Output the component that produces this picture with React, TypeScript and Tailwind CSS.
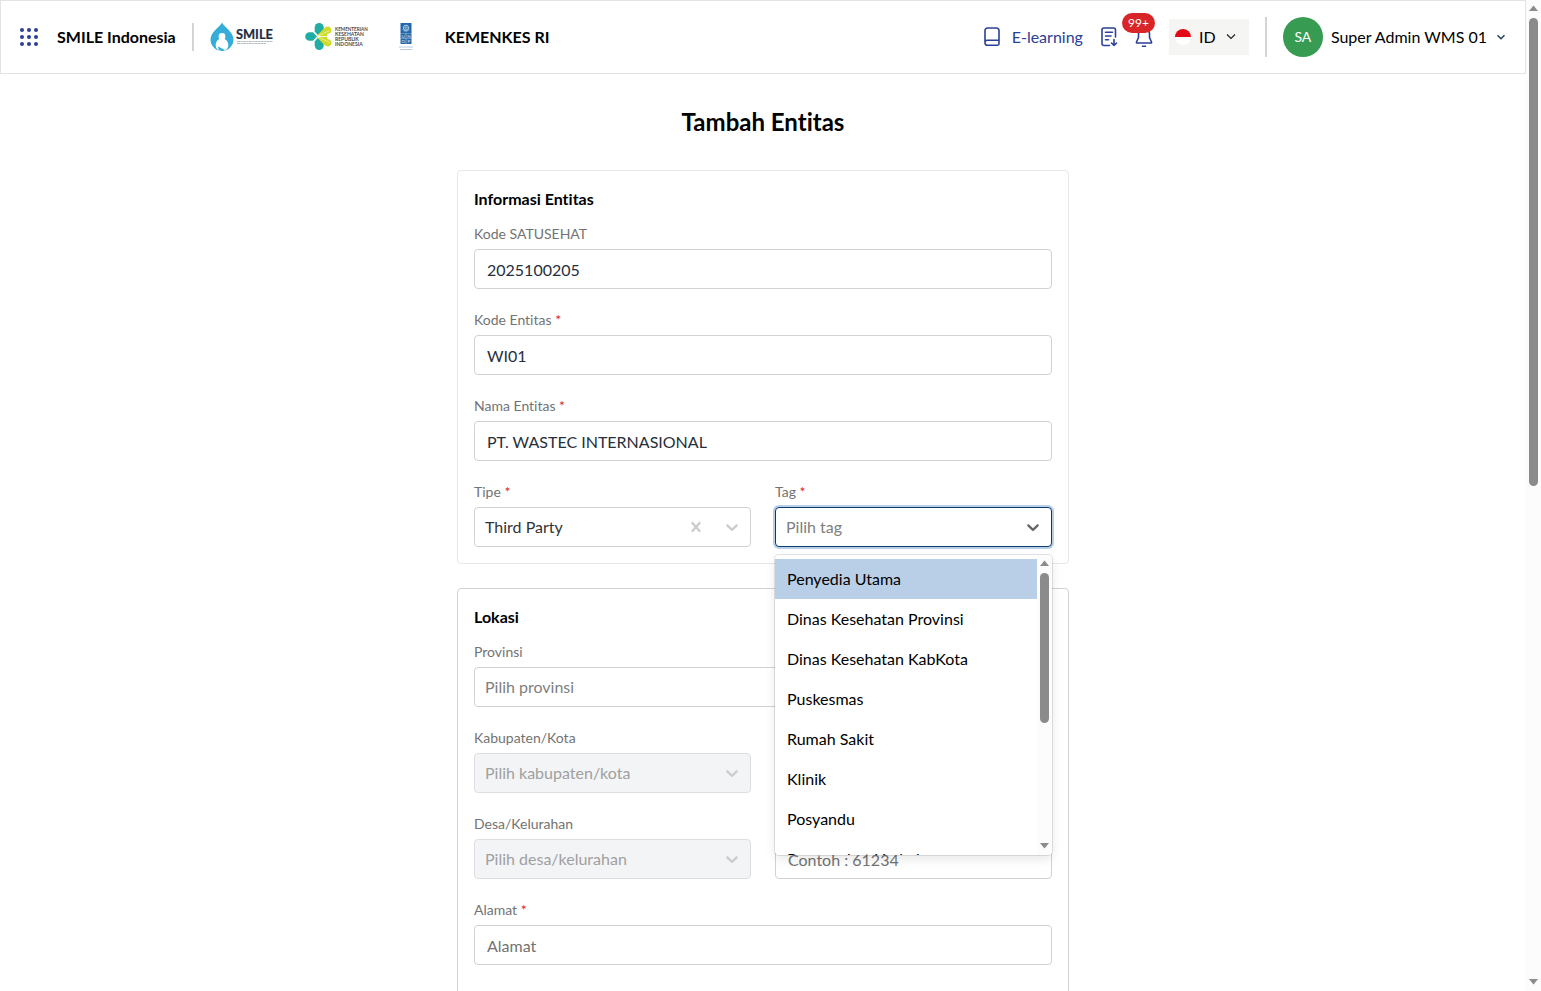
import type { ReactNode } from "react";

type FieldProps = { id: string; label: string; required?: boolean; children: ReactNode };
type SelectProps = { id: string; text: string; filled?: boolean; disabled?: boolean; clearable?: boolean; open?: boolean };

const tags = [
  "Penyedia Utama",
  "Dinas Kesehatan Provinsi",
  "Dinas Kesehatan KabKota",
  "Puskesmas",
  "Rumah Sakit",
  "Klinik",
  "Posyandu",
  "Pengangkut Limbah",
];

const inputClass = "block h-10 w-full rounded border border-[#d2d2d2] bg-white px-3 text-base text-[#262f3c] placeholder:text-[#737373] outline-none";

function Chevron({ className }: { className: string }) {
  return (
    <svg className={className} viewBox="0 0 20 20" fill="currentColor" aria-hidden="true">
      <path d="M4.516 7.548c0.436-0.446 1.043-0.481 1.576 0l3.908 3.747 3.908-3.747c0.533-0.481 1.141-0.446 1.574 0 0.436 0.445 0.408 1.197 0 1.615-0.406 0.418-4.695 4.502-4.695 4.502-0.217 0.223-0.502 0.335-0.787 0.335s-0.57-0.112-0.789-0.335c0 0-4.287-4.084-4.695-4.502s-0.436-1.17 0-1.615z" />
    </svg>
  );
}

function Cross() {
  return (
    <svg className="size-5" viewBox="0 0 20 20" fill="currentColor" aria-hidden="true">
      <path d="M14.348 14.849c-0.469 0.469-1.229 0.469-1.697 0l-2.651-3.030-2.651 3.029c-0.469 0.469-1.229 0.469-1.697 0-0.469-0.469-0.469-1.229 0-1.697l2.758-3.15-2.759-3.152c-0.469-0.469-0.469-1.228 0-1.697s1.228-0.469 1.697 0l2.652 3.031 2.651-3.031c0.469-0.469 1.228-0.469 1.697 0s0.469 1.229 0 1.697l-2.758 3.152 2.758 3.15c0.469 0.469 0.469 1.229 0 1.698z" />
    </svg>
  );
}

function Field({ id, label, required, children }: FieldProps) {
  return (
    <div className="relative min-w-0">
      <label htmlFor={id} className="mb-[5px] block text-sm leading-5 text-[#737373]">
        {label} {required && <span className="text-[#dc2626]">*</span>}
      </label>
      {children}
    </div>
  );
}

function Select({ id, text, filled, disabled, clearable, open }: SelectProps) {
  const tone = disabled ? "border-[#dcdee2] bg-[#f3f4f6] text-[#a0a0a0]" : filled ? "border-[#d2d2d2] bg-white text-[#333333]" : "bg-white text-[#808080]";
  const ring = open ? "border-[#0c3b70] ring-2 ring-[#b9cfe8]" : disabled ? "" : "border-[#d2d2d2]";
  return (
    <div className="relative">
      <select id={id} disabled={disabled} className={`block h-10 w-full appearance-none rounded border px-2.5 text-base opacity-100 outline-none ${tone} ${ring}`}>
        <option>{text}</option>
      </select>
      {clearable && (
        <button type="button" aria-label="Hapus" className="absolute inset-y-0 right-[45px] flex items-center text-[#cccccc]">
          <Cross />
        </button>
      )}
      <Chevron className={`pointer-events-none absolute right-[9px] top-2.5 size-5 ${open ? "text-[#666666]" : "text-[#cccccc]"}`} />
    </div>
  );
}

function ScrollBar({ thumb }: { thumb: string }) {
  return (
    <div className="flex w-[15px] shrink-0 flex-col items-center bg-[#fcfcfc]" aria-hidden="true">
      <svg className="my-1 h-2.5 w-[9px] shrink-0" viewBox="0 0 9 10"><path d="M4.500 1.500L9 7H0z" fill="#8b8b8b" /></svg>
      <div className="min-h-0 w-full flex-1 px-[3px]">
        <div className={`w-[9px] rounded-full bg-[#8b8b8b] ${thumb}`} />
      </div>
      <svg className="my-1 h-2.5 w-[9px] shrink-0" viewBox="0 0 9 10"><path d="M4.500 7.500L9 2H0z" fill="#8b8b8b" /></svg>
    </div>
  );
}

function SmileLogo() {
  return (
    <svg className="h-[30px] w-16" viewBox="0 0 64 30" role="img" aria-label="SMILE">
      <path d="M12 .5C14 5 23.500 9.500 23.500 18A11.500 11.500 0 0 1 12 29 11.500 11.500 0 0 1 .5 18C.5 9.500 10 5 12 .5z" fill="#35add9" />
      <circle cx="12" cy="14.500" r="3.400" fill="#fff" />
      <path d="M12 16.500c4 0 6.300 3 6.300 7 0 2.500-1.800 5-4.800 5.500l-5-3.500 2 3.500c-3-.5-4.800-3-4.800-5.500 0-4 2.300-7 6.300-7z" fill="#fff" />
      <path d="M8 24.500l7 3.600-2 1-4.500-1.600z" fill="#35add9" />
      <text x="26" y="16.800" fontFamily="Lato, sans-serif" fontSize="12.800" fontWeight="700" fill="#1d2c3f" stroke="#1d2c3f" strokeWidth=".2">SMILE</text>
      <path d="M27 19.500h36M27 21.500h29" stroke="#a3acb3" strokeWidth=".8" strokeDasharray="3 .5 2 .4" />
    </svg>
  );
}

function KemenkesLogo() {
  return (
    <svg className="h-[30px] w-[63px]" viewBox="0 0 63 30" role="img" aria-label="Kementerian Kesehatan Republik Indonesia">
      <g fill="#20ada5">
        <path d="M9.700 5.500a4.500 4.500 0 0 1 9 0V7.500L13 13.200 9.700 9.500z" />
        <path d="M9.700 23.500a4.500 4.500 0 0 0 9 0V21.500L13 15.800 9.700 19.500z" />
        <path d="M4.500 10.200a4.300 4.300 0 0 0 0 8.600H8l4-4.300-4-4.300z" />
      </g>
      <g fill="#cddc29">
        <path d="M11.500 14.100l8-8.100c2-1.900 4.500-1.900 6-.2 1.500 1.800 1.200 4.200-.6 5.500z" />
        <path d="M12.800 14.200l9.500-4.300v4.300z" />
        <path d="M11.500 14.900l8 8.100c2 1.900 4.500 1.900 6 .2 1.500-1.800 1.200-4.200-.6-5.500z" />
        <path d="M12.800 14.800l9.500 4.300v-4.300z" />
      </g>
      <path d="M12 14.500h11M12.500 14.200l12-5.600M12.500 14.800l12 5.600" stroke="#fff" strokeWidth=".5" />
      <g fontFamily="Lato, sans-serif" fontSize="5" fontWeight="700" fill="#4a4a4a">
        <text x="30" y="8.500" fontSize="4.600">KEMENTERIAN</text>
        <text x="30" y="13.500">KESEHATAN</text>
        <text x="30" y="18.500">REPUBLIK</text>
        <text x="30" y="23.500">INDONESIA</text>
      </g>
    </svg>
  );
}

function UndpLogo() {
  return (
    <svg className="h-[30px] w-[14px]" viewBox="0 0 14 30" role="img" aria-label="UNDP">
      <path d="M1.500 1h11v10h-11zM1.500 11.300h5.300v5.200H1.500zM7.200 11.300h5.300v5.200H7.200zM1.500 16.800h5.300v5.200H1.500zM7.200 16.800h5.300v5.200H7.200z" fill="#2468ac" />
      <circle cx="7" cy="5.800" r="2.600" fill="none" stroke="#c5daec" strokeWidth=".9" />
      <path d="M4.400 5.800h5.200M7 3.200v5.200M3.500 7.500Q7 11 10.500 7.500" fill="none" stroke="#c5daec" strokeWidth=".6" />
      <g fontFamily="Lato, sans-serif" fontSize="4.500" fill="#d6e5f2" textAnchor="middle">
        <text x="4.100" y="15.600">U</text>
        <text x="9.900" y="15.600">N</text>
        <text x="4.100" y="21.100">D</text>
        <text x="9.900" y="21.100">P</text>
      </g>
      <path d="M0 25h14M1 27.500h12" stroke="#a5bdd5" strokeWidth=".8" />
    </svg>
  );
}

function Header() {
  return (
    <header className="flex h-[74px] items-center border border-[#e3e3e3] bg-white pl-[19px] pr-5 text-base text-black">
      <button type="button" aria-label="Menu aplikasi" className="mr-[18px]">
        <svg className="h-5 w-[19px]" viewBox="0 0 19 20" fill="#2c4097">
          {[3, 10, 17].map((y) => [2, 9, 16].map((x) => <circle key={`${x}-${y}`} cx={x} cy={y} r="2" />))}
        </svg>
      </button>
      <span className="font-bold">SMILE Indonesia</span>
      <div className="mx-4 h-7 w-0.5 bg-[#d4d4d4]" />
      <div className="flex items-center gap-[31px]">
        <SmileLogo />
        <KemenkesLogo />
        <UndpLogo />
      </div>
      <span className="ml-8 font-bold">KEMENKES RI</span>

      <div className="ml-auto flex items-center">
        <a href="#elearning" className="flex items-center gap-3 text-[#2c4097]">
          <svg className="h-5 w-4" viewBox="0 0 16 20" fill="none" stroke="currentColor" strokeWidth="1.600" strokeLinecap="round" strokeLinejoin="round">
            <path d="M1 16V3.500A2.500 2.500 0 0 1 3.500 1h9A2.500 2.500 0 0 1 15 3.500V16.500a1.800 1.800 0 0 1-1.800 1.800H3.300A2.300 2.300 0 0 1 1 16a2.300 2.300 0 0 1 2.300-2.800H15" />
          </svg>
          E-learning
        </a>
        <button type="button" aria-label="Unduhan" className="ml-[18px] text-[#2c4097]">
          <svg className="h-5 w-[17px]" viewBox="0 0 17 20" fill="none" stroke="currentColor" strokeWidth="1.600" strokeLinecap="round" strokeLinejoin="round">
            <path d="M8.500 18.500H3a2 2 0 0 1-2-2V3a2 2 0 0 1 2-2h9.500a2 2 0 0 1 2 2v7M4.500 5.300h7M4.500 9h5.500M4.500 12.700h3M13 12.500v6M10.500 16l2.500 2.500 2.500-2.500" />
          </svg>
        </button>
        <button type="button" aria-label="Notifikasi" className="relative ml-4 text-[#2c4097]">
          <svg className="h-[22px] w-5" viewBox="0 0 20 22" fill="none" stroke="currentColor" strokeWidth="1.600" strokeLinecap="round" strokeLinejoin="round">
            <path d="M4.500 11.500V8a5.500 5.500 0 0 1 11 0v3.500l2 4.500v1h-15v-1zM8.500 20.300h3" />
          </svg>
          <span className="absolute -top-[13px] -right-px rounded-full bg-[#d82628] px-1.5 text-xs leading-5 text-white">99+</span>
        </button>
        <button type="button" className="ml-[15px] flex h-9 w-20 items-center bg-[#f5f5f4] pl-1.5">
          <svg className="size-4" viewBox="0 0 16 16" aria-hidden="true">
            <circle cx="8" cy="8" r="8" fill="#fff" />
            <path d="M0 8a8 8 0 0 1 16 0z" fill="#e30a17" />
          </svg>
          <span className="ml-2">ID</span>
          <svg className="ml-2.5 h-2 w-2.5" viewBox="0 0 10 8" fill="none" stroke="#222" strokeWidth="1.200"><path d="M1 1.500l4 4 4-4" /></svg>
        </button>
        <div className="mx-4 h-10 w-0.5 bg-[#d4d4d4]" />
        <button type="button" className="flex items-center">
          <span className="flex size-10 items-center justify-center rounded-full bg-[#379b52] text-sm text-white">SA</span>
          <span className="ml-2">Super Admin WMS 01</span>
          <svg className="ml-2.5 h-2 w-2" viewBox="0 0 8 8" fill="none" stroke="#1f3a5a" strokeWidth="1.400"><path d="M.5 2.300L4 5.800l3.500-3.500" /></svg>
        </button>
      </div>
    </header>
  );
}

export default function App() {
  return (
    <div className="flex h-screen bg-white font-['Lato',sans-serif] [font-variant-ligatures:no-common-ligatures]">
      <div className="min-w-0 flex-1 overflow-y-auto [scrollbar-width:none]">
        <Header />
        <main className="mx-auto w-full max-w-[612px] py-8">
          <h1 className="mb-8 text-center text-2xl leading-8 font-bold text-black">Tambah Entitas</h1>
          <form className="flex flex-col gap-6">
            <section className="rounded border border-[#e7e7e7] p-4">
              <h2 className="mb-[13px] text-base font-bold text-black">Informasi Entitas</h2>
              <div className="flex flex-col gap-[21px]">
                <Field id="kode-satusehat" label="Kode SATUSEHAT">
                  <input id="kode-satusehat" className={inputClass} defaultValue="2025100205" />
                </Field>
                <Field id="kode-entitas" label="Kode Entitas" required>
                  <input id="kode-entitas" className={inputClass} defaultValue="WI01" />
                </Field>
                <Field id="nama-entitas" label="Nama Entitas" required>
                  <input id="nama-entitas" className={inputClass} defaultValue="PT. WASTEC INTERNASIONAL" />
                </Field>
                <div className="grid grid-cols-2 gap-6">
                  <Field id="tipe" label="Tipe" required>
                    <Select id="tipe" text="Third Party" filled clearable />
                  </Field>
                  <Field id="tag" label="Tag" required>
                    <Select id="tag" text="Pilih tag" open />
                    {/* Open tag menu */}
                    <div className="absolute inset-x-0 top-full z-10 mt-2 flex h-[300px] overflow-hidden rounded bg-white shadow-[0_0_0_1px_rgba(0,0,0,0.1),0_4px_11px_rgba(0,0,0,0.1)]">
                      <ul role="listbox" aria-label="Tag" className="min-w-0 flex-1 overflow-y-auto py-1 [scrollbar-width:none]">
                        {tags.map((tag, i) => (
                          <li key={tag} role="option" aria-selected={i === 0} className={`px-3 py-2 text-base text-black ${i === 0 ? "bg-[#b9cfe8]" : ""}`}>
                            {tag}
                          </li>
                        ))}
                      </ul>
                      <ScrollBar thumb="h-[150px]" />
                    </div>
                  </Field>
                </div>
              </div>
            </section>

            <section className="rounded border border-[#d2d2d2] p-4">
              <h2 className="mb-[13px] text-base font-bold text-black">Lokasi</h2>
              <div className="flex flex-col gap-[21px]">
                <Field id="provinsi" label="Provinsi">
                  <Select id="provinsi" text="Pilih provinsi" />
                </Field>
                <div className="grid grid-cols-2 gap-6">
                  <Field id="kabupaten" label="Kabupaten/Kota">
                    <Select id="kabupaten" text="Pilih kabupaten/kota" disabled />
                  </Field>
                  <Field id="kecamatan" label="Kecamatan">
                    <Select id="kecamatan" text="Pilih kecamatan" disabled />
                  </Field>
                </div>
                <div className="grid grid-cols-2 gap-6">
                  <Field id="desa" label="Desa/Kelurahan">
                    <Select id="desa" text="Pilih desa/kelurahan" disabled />
                  </Field>
                  <Field id="kode-pos" label="Kode Pos">
                    <input id="kode-pos" className={inputClass} placeholder="Contoh : 61234" />
                  </Field>
                </div>
                <Field id="alamat" label="Alamat" required>
                  <input id="alamat" className={inputClass} placeholder="Alamat" />
                </Field>
                {/* Spare room so the card runs on below the fold */}
                <div className="h-40" />
              </div>
            </section>
          </form>
        </main>
      </div>
      <ScrollBar thumb="h-[49%] min-h-8" />
    </div>
  );
}
